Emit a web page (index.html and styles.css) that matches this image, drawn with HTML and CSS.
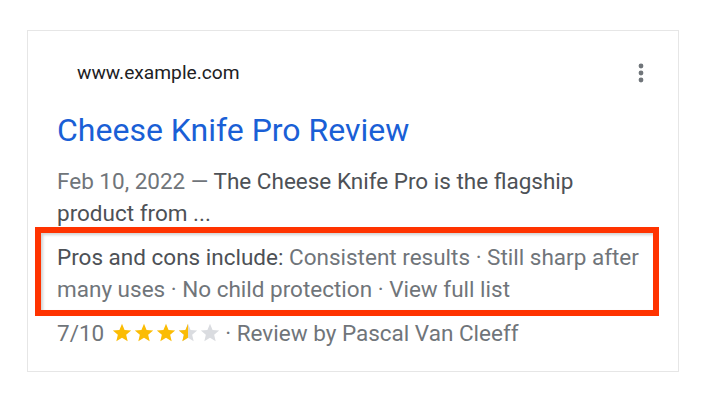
FILE: index.html
```html
<!DOCTYPE html>
<html lang="en">
<head>
<meta charset="utf-8">
<title>Cheese Knife Pro Review</title>
<link rel="stylesheet" href="styles.css">
</head>
<body>
<div class="card">
  <div class="header">
    <span class="url">www.example.com</span>
    <svg class="kebab" width="6" height="20" viewBox="0 0 6 20" aria-hidden="true">
      <circle cx="3" cy="3" r="2.4"/>
      <circle cx="3" cy="10" r="2.4"/>
      <circle cx="3" cy="17" r="2.4"/>
    </svg>
  </div>
  <h3 class="title">Cheese Knife Pro Review</h3>
  <p class="snippet"><span class="date">Feb 10, 2022 — </span>The Cheese Knife Pro is the flagship product from ...</p>
  <div class="proscons">
    <span class="label">Pros and cons include:</span> Consistent results · Still sharp after many uses · No child protection · View full list
  </div>
  <div class="rating">
    <span>7/10</span>
    <span class="stars">
      <svg class="star" viewBox="0 0 24 24"><path class="on" d="M12 17.27L18.18 21l-1.64-7.03L22 9.24l-7.19-.61L12 2 9.19 8.63 2 9.24l5.46 4.73L5.82 21z"/></svg><svg class="star" viewBox="0 0 24 24"><path class="on" d="M12 17.27L18.18 21l-1.64-7.03L22 9.24l-7.19-.61L12 2 9.19 8.63 2 9.24l5.46 4.73L5.82 21z"/></svg><svg class="star" viewBox="0 0 24 24"><path class="on" d="M12 17.27L18.18 21l-1.64-7.03L22 9.24l-7.19-.61L12 2 9.19 8.63 2 9.24l5.46 4.73L5.82 21z"/></svg><svg class="star" viewBox="0 0 24 24"><defs><clipPath id="half"><rect x="0" y="0" width="12" height="24"/></clipPath></defs><path class="off" d="M12 17.27L18.18 21l-1.64-7.03L22 9.24l-7.19-.61L12 2 9.19 8.63 2 9.24l5.46 4.73L5.82 21z"/><path class="on" clip-path="url(#half)" d="M12 17.27L18.18 21l-1.64-7.03L22 9.24l-7.19-.61L12 2 9.19 8.63 2 9.24l5.46 4.73L5.82 21z"/></svg><svg class="star" viewBox="0 0 24 24"><path class="off" d="M12 17.27L18.18 21l-1.64-7.03L22 9.24l-7.19-.61L12 2 9.19 8.63 2 9.24l5.46 4.73L5.82 21z"/></svg>
    </span>
    <span>· Review by Pascal Van Cleeff</span>
  </div>
</div>
</body>
</html>
```

FILE: styles.css
```css
html, body {
  margin: 0;
  padding: 0;
  background: #ffffff;
}

body {
  font-family: Roboto, "Noto Sans", Arial, sans-serif;
  color: #4d5156;
}

.card {
  box-sizing: border-box;
  width: 652px;
  margin: 30px 0 0 27px;
  border: 1px solid #e6e6e6;
  padding: 30px 29px 22px 29px;
}

.header {
  display: flex;
  align-items: center;
  justify-content: space-between;
  height: 24px;
  padding-left: 20px;
}

.url {
  font-size: 19.2px;
  line-height: 24px;
  color: #202124;
}

.kebab {
  fill: #70757a;
  margin-right: 5px;
}

.title {
  margin: 25px 0 0 0;
  font-weight: 400;
  font-size: 32px;
  line-height: 40px;
  color: #1a5fd6;
}

.snippet {
  margin: 15px 0 0 0;
  font-size: 22.5px;
  line-height: 32px;
  color: #4d5156;
}

.date {
  color: #70757a;
}

.proscons {
  margin: -2px -10px 0 -22px;
  border: 6px solid #ff3300;
  padding: 8px 4px 5px 16px;
  box-shadow: inset 2px 2px 3px rgba(0, 0, 0, 0.18);
  font-size: 22.5px;
  line-height: 32px;
  color: #70757a;
}

.label {
  color: #4d5156;
}

.rating {
  margin-top: 1px;
  display: flex;
  align-items: center;
  font-size: 22.5px;
  line-height: 32px;
  color: #70757a;
}

.stars {
  display: flex;
  align-items: center;
  margin: 0 4px 0 7px;
}

.star {
  width: 22px;
  height: 22px;
  display: block;
}

.on {
  fill: #fbbc04;
}

.off {
  fill: #dadce0;
}
```
